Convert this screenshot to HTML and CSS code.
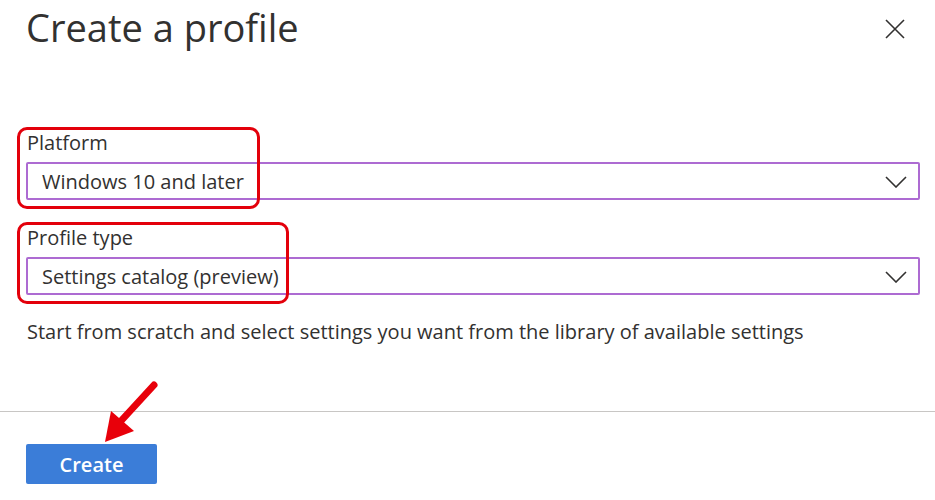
FILE: index.html
```html
<!DOCTYPE html>
<html lang="en">
<head>
<meta charset="utf-8">
<title>Create a profile</title>
<link rel="stylesheet" href="styles.css">
</head>
<body>
<div class="panel">
  <div class="content">
    <header class="head">
      <h1 class="title">Create a profile</h1>
      <button class="close" aria-label="Close">
        <svg width="20" height="20" viewBox="0 0 20 20"><path d="M1 1 L19 19 M19 1 L1 19" stroke="#323130" stroke-width="1.6" fill="none"/></svg>
      </button>
    </header>

    <div class="field field-first">
      <div class="label">Platform</div>
      <div class="select">
        <span class="value">Windows 10 and later</span>
        <svg class="chev" width="22" height="12" viewBox="0 0 22 12"><path d="M1 1 L11 11 L21 1" stroke="#323130" stroke-width="1.6" fill="none"/></svg>
      </div>
    </div>

    <div class="field">
      <div class="label">Profile type</div>
      <div class="select">
        <span class="value">Settings catalog (preview)</span>
        <svg class="chev" width="22" height="12" viewBox="0 0 22 12"><path d="M1 1 L11 11 L21 1" stroke="#323130" stroke-width="1.6" fill="none"/></svg>
      </div>
    </div>

    <p class="desc">Start from scratch and select settings you want from the library of available settings</p>
  </div>

  <hr class="divider">

  <div class="footer">
    <button class="btn-primary">Create</button>
  </div>
</div>

<div class="highlight hl-platform"></div>
<div class="highlight hl-type"></div>

<svg class="arrow" width="935" height="500" viewBox="0 0 935 500">
  <line x1="154" y1="385" x2="120" y2="422" stroke="#e8000a" stroke-width="7" stroke-linecap="round"/>
  <polygon points="105,442 111,411 134,431" fill="#e8000a"/>
</svg>
</body>
</html>
```

FILE: styles.css
```css
* { box-sizing: border-box; }

html, body {
  margin: 0;
  padding: 0;
  background: #ffffff;
}

body {
  font-family: "Open Sans", "Noto Sans", "DejaVu Sans", sans-serif;
  color: #323130;
  width: 935px;
  height: 500px;
  overflow: hidden;
  position: relative;
}

.panel {
  display: flex;
  flex-direction: column;
}

.content {
  padding: 0 15px 0 26px;
}

.head {
  display: flex;
  justify-content: space-between;
  align-items: flex-start;
}

.title {
  margin: 5px 0 0 0;
  font-size: 38px;
  line-height: 44px;
  font-weight: 400;
  color: #323130;
}

.close {
  border: 0;
  background: transparent;
  padding: 0;
  margin: 19px 15px 0 0;
  width: 20px;
  height: 20px;
  display: flex;
}

.field { display: flex; flex-direction: column; }
.field-first { margin-top: 82px; }
.field + .field { margin-top: 26px; }

.label {
  font-size: 20px;
  line-height: 24px;
  height: 24px;
  margin-bottom: 7px;
  padding-left: 1px;
}

.select {
  height: 38px;
  border: 2px solid #ad6bd2;
  border-radius: 2px;
  display: flex;
  align-items: center;
  justify-content: space-between;
  padding: 1px 11px 0 14px;
}

.value {
  font-size: 20px;
  line-height: 34px;
}

.chev { display: block; }

.desc {
  margin: 25px 0 0 0;
  font-size: 20px;
  line-height: 24px;
  padding-left: 1px;
}

.divider {
  margin: 67px 0 0 0;
  border: 0;
  border-top: 1px solid #c8c6c4;
  height: 0;
  width: 100%;
}

.footer {
  padding: 32px 0 0 26px;
}

.btn-primary {
  width: 131px;
  height: 40px;
  border: 0;
  border-radius: 2px;
  background: #3b7dd8;
  color: #ffffff;
  font-family: "Open Sans", "Noto Sans", sans-serif;
  font-weight: 600;
  font-size: 20px;
  padding: 0;
}

.highlight {
  position: absolute;
  border: 3px solid #e3000b;
  border-radius: 10px;
  pointer-events: none;
}

.hl-platform { left: 17px; top: 127px; width: 243px; height: 82px; }
.hl-type { left: 17px; top: 222px; width: 272px; height: 82px; }

.arrow {
  position: absolute;
  left: 0;
  top: 0;
  pointer-events: none;
}
```
